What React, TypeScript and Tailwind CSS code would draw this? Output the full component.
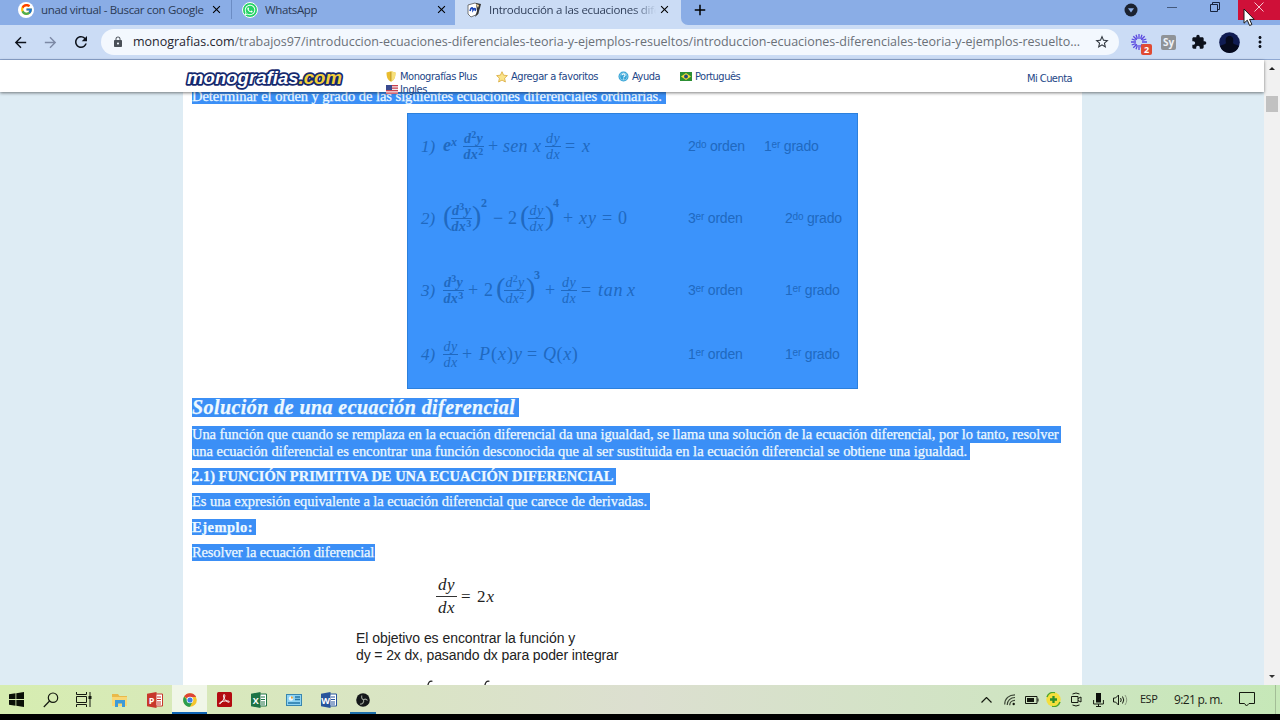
import type { ReactNode } from "react";
import { FcGoogle } from "react-icons/fc";
import { FaWhatsapp } from "react-icons/fa";
import {
  MdArrowBack,
  MdArrowForward,
  MdRefresh,
  MdLock,
  MdStarBorder,
  MdExtension,
  MdMoreVert,
  MdClose,
  MdAdd,
} from "react-icons/md";

/* ---------- Browser chrome ---------- */

const Monster = () => (
  <svg width="16" height="16" viewBox="0 0 16 16">
    <path d="M2 3l7-2 4 2-1 9-7 3-3-3z" fill="#fff" stroke="#555" strokeWidth=".8" />
    <path d="M10 1l5 1-1 4-2 6-3 3 2-6z" fill="#333" />
    <path d="M10 2l3 1-1 3z" fill="#f3d7a0" />
    <path d="M4 9c1-4 3-4 3-1 2-3 3-1 2 1" fill="none" stroke="#1c46b8" strokeWidth="1.600" />
  </svg>
);

function TabStrip() {
  return (
    <div className="h-[25px] flex bg-[#8aade6] text-[11.500px] text-[#2b3a55]">
      <div className="w-[232px] h-[19px] flex items-center pl-[18px] border-r border-[#6b8cc4]">
        <span className="w-4 h-4 rounded-full bg-white flex items-center justify-center">
          <FcGoogle size={13} />
        </span>
        <span className="ml-[7px] w-[169px] whitespace-nowrap tracking-[-0.35px]">
          unad virtual - Buscar con Google
        </span>
        <MdClose size={13} className="text-black" />
      </div>
      <div className="w-[223px] h-[19px] flex items-center pl-[10px]">
        <span className="w-4 h-4 rounded-full bg-[#25d366] border border-white flex items-center justify-center">
          <FaWhatsapp size={12} className="text-white" />
        </span>
        <span className="ml-[7px] w-[170px] whitespace-nowrap tracking-[-0.35px]">WhatsApp</span>
        <MdClose size={13} className="text-black" />
      </div>
      <div className="w-[226px] h-[25px] bg-[#cbdcf5] flex items-start pl-[11px]">
        <div className="h-[19px] flex items-center">
          <Monster />
          <span className="ml-[7px] w-[169px] overflow-hidden whitespace-nowrap tracking-[-0.3px] bg-gradient-to-r from-[#2b3a55] from-85% to-[#cbdcf5] to-99% bg-clip-text text-transparent">
            Introducción a las ecuaciones diferenciales
          </span>
          <MdClose size={13} className="text-black" />
        </div>
      </div>
      <div className="flex-1 flex bg-[#cbdcf5]">
        <div className="flex-1 flex rounded-bl-[7px] bg-[#8aade6]">
          <div className="w-[438px] h-[19px] flex items-center pl-[10px]">
            <MdAdd size={18} className="text-black" />
          </div>
          <div className="w-[24px] h-[19px] flex items-center justify-center">
            <svg width="14" height="14" viewBox="0 0 14 14">
              <circle cx="7" cy="7" r="6.500" fill="#1b2230" />
              <path d="M4 5.200h6L7 9.400z" fill="#8aade6" />
            </svg>
          </div>
          <div className="w-[57px] h-[15px] flex items-center justify-center">
            <span className="w-[10px] h-px bg-[#44597c]" />
          </div>
          <div className="w-[37px] h-[14px] flex items-center justify-end pr-[17px]">
            <svg width="10" height="10" viewBox="0 0 10 10" fill="none" stroke="#16233d">
              <path d="M.5 2.500h7v7h-7zM2.500 2.500v-2h7v7h-2" />
            </svg>
          </div>
          <div className="relative ml-auto w-[42px] h-5 bg-[#cf1038] flex items-center justify-center">
            <svg className="mb-[6px]" width="10" height="10" viewBox="0 0 10 10" stroke="#f4c6d0">
              <path d="M.5.5l9 9M9.500.5l-9 9" />
            </svg>
            <svg className="absolute left-[5px] top-[8px] z-30" width="13" height="19" viewBox="0 0 13 19">
              <path
                d="M1 1v14.200l3.300-3 2.300 5.300 2.300-1-2.300-5.100h4.600z"
                fill="#fff"
                stroke="#1a1a1a"
              />
            </svg>
          </div>
        </div>
      </div>
    </div>
  );
}

function Toolbar() {
  return (
    <div className="h-[35px] flex items-center bg-[#cbdcf5] border-b border-[#8fa8d2] text-[#0c111b]">
      <div className="w-[101px] flex items-center pl-[12px] gap-[13px]">
        <MdArrowBack size={17} />
        <MdArrowForward size={17} className="text-[#7c89a5]" />
        <MdRefresh size={18} />
      </div>
      <div className="w-[1018px] h-[26px] rounded-full bg-[#f3f8fe] flex items-center pl-[11px]">
        <MdLock size={12} className="text-[#4a5058]" />
        <span className="ml-[9px] w-[953px] whitespace-nowrap text-[12.500px] tracking-[-0.015px] text-[#6a7078]">
          <span className="text-[#1f2530]">monografias.com</span>
          /trabajos97/introduccion-ecuaciones-diferenciales-teoria-y-ejemplos-resueltos/introduccion-ecuaciones-diferenciales-teoria-y-ejemplos-resuelto...
        </span>
        <MdStarBorder size={16} className="ml-[8px] text-[#30363e]" />
      </div>
      <div className="flex-1 flex items-center pl-[12px]">
        <div className="relative w-[30px]">
          <svg width="16" height="16" viewBox="0 0 16 16" stroke="#5a48e0" strokeWidth="1.300">
            <path d="M8 0v5M8 11v5M0 8h5M11 8h5M2.300 2.300l3.500 3.500M10.200 10.200l3.500 3.500M2.300 13.700l3.500-3.500M10.200 5.800l3.500-3.500M5 .7l1.400 4M9.600 11.300l1.400 4M11 .7l-1.400 4M6.400 11.300L5 15.300M.7 5l4 1.400M.7 11l4-1.400M11.300 6.400l4-1.400" />
          </svg>
          <span className="absolute left-[10px] top-[10px] w-[11px] h-[11px] rounded-[2px] bg-[#e04a32] text-white text-[9px] leading-[11px] font-bold text-center">
            2
          </span>
        </div>
        <span className="w-[15px] h-[15px] rounded-[2px] bg-[#8f9397] text-[#eef2f8] text-[10px] leading-[14px] font-bold text-center">
          Sy
        </span>
        <MdExtension size={16} className="ml-[15px]" />
        <svg className="ml-[12px]" width="21" height="21" viewBox="0 0 21 21">
          <circle cx="10.500" cy="10.500" r="10.300" fill="#101c52" />
          <path d="M1 14a10 10 0 0019 0c-3-2-5-1-6-3 1-5-.5-7-3.500-7S6 6 7 11c-1 2-3 1-6 3z" fill="#060a1c" />
        </svg>
        <MdMoreVert size={18} className="ml-[11px]" />
      </div>
    </div>
  );
}

/* ---------- Site header ---------- */

const Logo = () => (
  <svg width="160" height="24" viewBox="0 0 160 24">
    <text
      x="3"
      y="17"
      textLength="155"
      lengthAdjust="spacingAndGlyphs"
      fontFamily="Liberation Sans, sans-serif"
      fontWeight="bold"
      fontStyle="italic"
      fontSize="18"
      stroke="#14286e"
      strokeWidth="3.400"
      strokeLinejoin="round"
      paintOrder="stroke"
      fill="#fff"
    >
      monografias<tspan fill="#f2cf3a">.com</tspan>
    </text>
  </svg>
);

const Shield = () => (
  <svg width="10" height="11" viewBox="0 0 10 11">
    <path d="M.5 1.500L5 .3l4.500 1.200C9.500 6 8.500 9 5 10.700 1.500 9 .5 6 .5 1.500z" fill="#e9bc2e" />
    <path d="M5 .3l4.500 1.200C9.500 6 8.500 9 5 10.700z" fill="#f7e07a" />
    <path d="M5 1v9" stroke="#a9851c" strokeWidth=".7" />
  </svg>
);

const Star = () => (
  <svg width="12" height="12" viewBox="0 0 12 12">
    <path
      d="M6 .7l1.600 3.500 3.800.4-2.800 2.600.8 3.800L6 9.100 2.600 11l.8-3.800L.6 4.600l3.800-.4z"
      fill="#fbe48a"
      stroke="#d9a93a"
      strokeWidth=".8"
    />
  </svg>
);

const Help = () => (
  <svg width="11" height="11" viewBox="0 0 11 11">
    <circle cx="5.500" cy="5.500" r="5" fill="#35a3d6" />
    <circle cx="5.500" cy="5.500" r="3.700" fill="none" stroke="#a7dbf0" strokeWidth=".6" />
    <path d="M4 4.300c0-2 3.200-1.800 3.100 0C7 5.500 5.600 5.300 5.600 6.600M5.600 7.500v1.100" stroke="#fff" fill="none" strokeWidth="1.100" />
  </svg>
);

const Brazil = () => (
  <svg width="12" height="9" viewBox="0 0 12 9">
    <path d="M0 0h12v9H0z" fill="#2c8f34" />
    <path d="M6 1l5 3.500L6 8 1 4.500z" fill="#f1dc3b" />
    <circle cx="6" cy="4.500" r="1.900" fill="#24487e" />
  </svg>
);

const Usa = () => (
  <svg width="12" height="9" viewBox="0 0 12 9">
    <path d="M0 0h12v9H0z" fill="#f4e9ec" />
    <path d="M0 .7h12M0 3.200h12M0 5.700h12M0 8.200h12" stroke="#c9424e" strokeWidth="1.200" />
    <path d="M0 0h6v5H0z" fill="#3a4a8e" />
  </svg>
);

function SiteHeader() {
  return (
    <div className="relative z-10 h-8 w-[1264px] bg-white shadow-[0_1px_3px_rgba(0,0,0,0.5)] flex text-[#1d4687] text-[11px] leading-[13px] [font-family:'DejaVu_Sans_Condensed','DejaVu_Sans',sans-serif]">
      <div className="pl-[184px] pt-[7px] w-[386px]">
        <Logo />
      </div>
      <div className="w-[641px] h-8 flex flex-col pt-[10px]">
        <div className="flex items-center">
          <div className="w-[110px] flex items-center gap-[4px] tracking-[-0.45px] whitespace-nowrap"><Shield />Monografías Plus</div>
          <div className="w-[122px] flex items-center gap-[3px] tracking-[-0.42px] whitespace-nowrap"><Star />Agregar a favoritos</div>
          <div className="w-[62px] flex items-center gap-[3px] tracking-[-0.5px]"><Help />Ayuda</div>
          <div className="flex items-center gap-[3px] tracking-[-0.5px]"><Brazil />Português</div>
        </div>
        <div className="flex items-center gap-[2px] tracking-[-0.4px]"><Usa />Ingles</div>
      </div>
      <span className="pt-[12px] tracking-[-0.55px] whitespace-nowrap">Mi Cuenta</span>
    </div>
  );
}

/* ---------- Maths ---------- */

// One symbol of an equation, in a cell of fixed width
const T = ({ w, children, up = false }: { w: string; children: ReactNode; up?: boolean }) => (
  <span className={`${w} shrink-0 whitespace-nowrap ${up ? "relative -top-[15px] text-[12px] font-bold not-italic" : ""}`}>
    {children}
  </span>
);

const N = ({ w, children }: { w: string; children: ReactNode }) => (
  <span className={`${w} shrink-0 whitespace-nowrap not-italic`}>{children}</span>
);

const Paren = ({ w, children }: { w: string; children: ReactNode }) => (
  <span className={`${w} shrink-0 not-italic text-[28px] leading-[28px] -translate-y-[2px]`}>{children}</span>
);

const Frac = ({ w, pow = "", bold = false }: { w: string; pow?: string; bold?: boolean }) => (
  <span className={`${w} shrink-0 flex flex-col items-center text-[14px] leading-[15px] ${bold ? "font-bold" : ""}`}>
    <span className="w-full text-center border-b border-[#2069c0] h-[16px] whitespace-nowrap tracking-[0.3px]">
      d<span className="relative -top-[5px] text-[10px] not-italic">{pow}</span>y
    </span>
    <span className="h-[15px] whitespace-nowrap tracking-[0.3px]">
      dx<span className="relative -top-[4px] text-[10px] not-italic">{pow}</span>
    </span>
  </span>
);

const rows = [
  {
    n: "1)",
    height: "h-[66px]",
    orden: ["2", "do"],
    ordenW: "w-[76px]",
    grado: ["1", "er"],
    eq: (
      <>
        <span className="w-[20px] font-bold shrink-0">e<span className="relative -top-[5px] text-[12px]">x</span></span>
        <Frac w="w-[21px]" pow="2" bold />
        <N w="w-[19px] pl-[4px]">+</N>
        <T w="w-[30px] tracking-[0.3px]">sen</T>
        <T w="w-[12px]">x</T>
        <Frac w="w-[16px]" />
        <N w="w-[21px] pl-[4px]">=</N>
        <T w="w-[10px]">x</T>
      </>
    ),
  },
  {
    n: "2)",
    height: "h-[78px]",
    orden: ["3", "er"],
    ordenW: "w-[97px]",
    grado: ["2", "do"],
    eq: (
      <>
        <Paren w="w-[8px]">(</Paren>
        <Frac w="w-[21px]" pow="3" bold />
        <Paren w="w-[9px]">)</Paren>
        <T up w="w-[12px]">2</T>
        <N w="w-[15px]">−</N>
        <N w="w-[12px]">2</N>
        <Paren w="w-[8px]">(</Paren>
        <Frac w="w-[17px]" />
        <Paren w="w-[8px]">)</Paren>
        <T up w="w-[10px]">4</T>
        <N w="w-[16px]">+</N>
        <T w="w-[23px] tracking-[1px]">xy</T>
        <N w="w-[16px]">=</N>
        <N w="w-[10px]">0</N>
      </>
    ),
  },
  {
    n: "3)",
    height: "h-[66px]",
    orden: ["3", "er"],
    ordenW: "w-[97px]",
    grado: ["1", "er"],
    eq: (
      <>
        <Frac w="w-[21px]" pow="3" bold />
        <N w="w-[20px] pl-[4px]">+</N>
        <N w="w-[12px]">2</N>
        <Paren w="w-[8px]">(</Paren>
        <Frac w="w-[22px]" pow="2" />
        <Paren w="w-[8px]">)</Paren>
        <T up w="w-[11px]">3</T>
        <N w="w-[16px]">+</N>
        <Frac w="w-[16px]" />
        <N w="w-[21px] pl-[4px]">=</N>
        <T w="w-[29px] tracking-[0.8px]">tan</T>
        <T w="w-[10px]">x</T>
      </>
    ),
  },
  {
    n: "4)",
    height: "h-[62px]",
    orden: ["1", "er"],
    ordenW: "w-[97px]",
    grado: ["1", "er"],
    eq: (
      <>
        <Frac w="w-[15px]" />
        <N w="w-[21px] pl-[4px]">+</N>
        <T w="w-[48px] tracking-[1px]">P<span className="not-italic">(</span>x<span className="not-italic">)</span>y</T>
        <N w="w-[16px]">=</N>
        <T w="w-[36px] tracking-[0.6px]">Q<span className="not-italic">(</span>x<span className="not-italic">)</span></T>
      </>
    ),
  },
];

const Ordinal = ({ parts, word }: { parts: string[]; word: string }) => (
  <>
    {parts[0]}
    <span className="relative -top-[3px] text-[10px]">{parts[1]}</span> {word}
  </>
);

function Exercises() {
  return (
    <div className="ml-[224px] mt-[9px] w-[451px] h-[276px] bg-[#3b93fb] border border-[#2c80dc] text-[#2069c0]">
      {rows.map((row) => (
        <div key={row.n} className={`${row.height} flex items-center pl-[13px]`}>
          <span className="w-[22px] pb-[2px] italic text-[17px]">{row.n}</span>
          <div className="w-[245px] pb-[2px] flex items-center italic text-[18px]">{row.eq}</div>
          <span className={`${row.ordenW} whitespace-nowrap text-[14px] tracking-[-0.2px] [font-family:'Liberation_Sans',sans-serif]`}>
            <Ordinal parts={row.orden} word="orden" />
          </span>
          <span className="whitespace-nowrap text-[14px] tracking-[-0.2px] [font-family:'Liberation_Sans',sans-serif]">
            <Ordinal parts={row.grado} word="grado" />
          </span>
        </div>
      ))}
    </div>
  );
}

/* ---------- Article ---------- */

// Selected line of text
const Sel = ({ className, children }: { className: string; children: ReactNode }) => (
  <div className={`ml-[9px] bg-[#3b8ff6] text-[#eef9ff] whitespace-nowrap [-webkit-text-stroke:0.25px_#eef9ff] ${className}`}>
    {children}
  </div>
);

const IntegralTip = () => (
  <svg width="6" height="6" viewBox="0 0 6 6" fill="none" stroke="#222" strokeWidth="1.300">
    <path d="M.8 6C1.200 2.500 2.500.6 5.400 1.300" />
  </svg>
);

function Article() {
  return (
    <div className="w-[899px] h-[593px] overflow-hidden bg-white text-[14.500px] leading-[17px] [font-family:'Liberation_Serif',serif]">
      <Sel className="w-[474px] h-[12px] leading-[9px] tracking-[-0.04px]">
        Determinar el orden y grado de las siguientes ecuaciones diferenciales ordinarias.
      </Sel>
      <Exercises />
      <Sel className="mt-[9px] w-[327px] h-[19px] text-[20px] leading-[19px] font-bold italic tracking-[0.43px]">
        Solución de una ecuación diferencial
      </Sel>
      <Sel className="mt-[9px] w-[869px] h-[17px] tracking-[-0.055px]">
        Una función que cuando se remplaza en la ecuación diferencial da una igualdad, se llama una solución de la ecuación diferencial, por lo tanto, resolver
      </Sel>
      <Sel className="w-[778px] h-[17px] tracking-[-0.02px]">
        una ecuación diferencial es encontrar una función desconocida que al ser sustituida en la ecuación diferencial se obtiene una igualdad.
      </Sel>
      <Sel className="mt-[8px] w-[424px] h-[17px] font-bold">
        2.1) FUNCIÓN PRIMITIVA DE UNA ECUACIÓN DIFERENCIAL
      </Sel>
      <Sel className="mt-[8px] w-[458px] h-[17px] tracking-[-0.06px]">
        Es una expresión equivalente a la ecuación diferencial que carece de derivadas.
      </Sel>
      <Sel className="mt-[9px] w-[64px] h-[16px] font-bold tracking-[0.5px]">Ejemplo:</Sel>
      <Sel className="mt-[9px] w-[183px] h-[17px] tracking-[-0.13px]">Resolver la ecuación diferencial</Sel>

      <div className="mt-[13px] mb-[12px] ml-[253px] h-[44px] flex items-center italic text-[17px] text-[#222]">
        <span className="w-[21px] flex flex-col items-center leading-[21px]">
          <span className="w-full h-[23px] leading-[22px] text-center border-b border-[#333] tracking-[0.5px]">dy</span>
          <span className="tracking-[0.5px]">dx</span>
        </span>
        <span className="ml-[4px] w-[16px] not-italic">=</span>
        <span className="tracking-[1px]"><span className="not-italic">2</span>x</span>
      </div>

      <div className="ml-[173px] text-[14px] text-[#222] [font-family:'Liberation_Sans',sans-serif]">
        <p className="tracking-[-0.05px]">El objetivo es encontrar la función y</p>
        <p className="tracking-[-0.12px]">dy = 2x dx, pasando dx para poder integrar</p>
      </div>
      <div className="mt-[16px] ml-[244px] flex gap-[51px]">
        <IntegralTip />
        <IntegralTip />
      </div>
    </div>
  );
}

function Scrollbar() {
  return (
    <div className="w-4 h-[625px] bg-[#f1f1f1] flex flex-col items-center justify-between py-[7px]">
      <div className="flex flex-col items-center gap-[26px]">
        <svg width="6" height="3" viewBox="0 0 6 3"><path d="M0 3h6L3 0z" fill="#222" /></svg>
        <span className="w-3 h-4 bg-[#c1c1c1]" />
      </div>
      <svg width="6" height="3" viewBox="0 0 6 3"><path d="M0 0h6L3 3z" fill="#333" /></svg>
    </div>
  );
}

/* ---------- Taskbar ---------- */

const Office = ({ color, letter }: { color: string; letter: string }) => (
  <svg width="16" height="16" viewBox="0 0 16 16">
    <path d="M8 2h7.500v12H8z" fill="#fff" stroke={color} />
    <path d="M10 5h4M10 7.500h4M10 10h4M10 12h4" stroke={color} />
    <path d="M0 1.800L9.500 0v16L0 14.200z" fill={color} />
    <text x="4.700" y="11.500" fontSize="9" fontWeight="bold" fill="#fff" textAnchor="middle" fontFamily="Open Sans, sans-serif">
      {letter}
    </text>
  </svg>
);

const apps = [
  {
    id: "start",
    icon: (
      <svg width="15" height="15" viewBox="0 0 15 15" fill="#0a0f08">
        <path d="M0 2.200l6.500-.9v5.800H0zM7.300 1.200L15 0v7.100H7.300zM0 7.900h6.500v5.800L0 12.800zM7.300 7.900H15V15l-7.700-1.200z" />
      </svg>
    ),
  },
  {
    id: "search",
    icon: (
      <svg width="16" height="16" viewBox="0 0 16 16" fill="none" stroke="#151a10" strokeWidth="1.200">
        <circle cx="10" cy="5.700" r="4.700" />
        <path d="M6.600 9L.8 15" />
      </svg>
    ),
  },
  {
    id: "tasks",
    icon: (
      <svg className="-ml-[3px]" width="16" height="15" viewBox="0 0 16 15" fill="none" stroke="#151a10">
        <path d="M.5 0v2.500h10V0M.5 4.500h10v6H.5zM.5 15v-2.500h10V15M14 0v15" />
        <path d="M12.500 4h3v3h-3z" fill="#151a10" stroke="none" />
      </svg>
    ),
  },
  {
    id: "files",
    icon: (
      <svg width="16" height="14" viewBox="0 0 16 14">
        <path d="M0 1h6l1.500 2H15v10H0z" fill="#e9b94a" />
        <path d="M0 4h15v9H0z" fill="#f8d775" />
        <path d="M3 7h10v7h-3v-3.500H6V14H3z" fill="#3d9bd8" />
      </svg>
    ),
  },
  { id: "powerpoint", icon: <Office color="#c8372b" letter="P" /> },
  {
    id: "chrome",
    active: true,
    icon: (
      <svg width="14" height="14" viewBox="0 0 14 14">
        <circle cx="7" cy="7" r="6.800" fill="#f4c52e" />
        <path d="M7 7L1.100 3.600A6.800 6.800 0 0112.900 3.600L13 4H7z" fill="#dd4437" />
        <path d="M1.100 3.600A6.800 6.800 0 007 13.800l2.600-5.300L7 10z" fill="#2a9d50" />
        <circle cx="7" cy="7" r="3.300" fill="#fff" />
        <circle cx="7" cy="7" r="2.600" fill="#3f7fe6" />
      </svg>
    ),
  },
  {
    id: "acrobat",
    icon: (
      <svg width="15" height="15" viewBox="0 0 15 15">
        <rect width="15" height="15" rx="1.500" fill="#b30b10" />
        <path
          d="M7 2.500c1.800 0 .8 4.500-3.700 9.200-1.800.6-1-1.800 3-2.500s6.500-.2 6 .8c-.8 1.200-5.800-2.200-5.800-6.500 0-.6.200-1 .5-1z"
          fill="none"
          stroke="#fff"
        />
      </svg>
    ),
  },
  { id: "excel", icon: <Office color="#1e7345" letter="X" /> },
  {
    id: "panel",
    icon: (
      <svg width="16" height="12" viewBox="0 0 16 12">
        <rect x=".5" y=".5" width="15" height="11" fill="#8fd3f2" stroke="#3886b0" />
        <circle cx="5" cy="4.500" r="2.200" fill="#eaf7fd" />
        <path d="M5 4.500V2.300a2.200 2.200 0 012.200 2.200z" fill="#e9a23a" />
        <path d="M9 3h5M9 5.500h5M2 9h12" stroke="#2577a8" strokeWidth="1.300" />
      </svg>
    ),
  },
  { id: "word", icon: <Office color="#27549b" letter="W" /> },
  {
    id: "obs",
    running: true,
    icon: (
      <svg width="14" height="14" viewBox="0 0 14 14">
        <circle cx="7" cy="7" r="6.800" fill="#15181a" />
        <path d="M6 2.500a3 3 0 001.500 4.300M11.500 7.500a3 3 0 00-4-.7M4 11a3 3 0 003.400-4.200" fill="none" stroke="#9da39a" strokeWidth="1.100" />
      </svg>
    ),
  },
];

function Taskbar() {
  return (
    <div className="h-[29px] flex bg-gradient-to-r from-[#d6edb0] via-[#dcdfd0] to-[#c6e8b8] text-[#1c2318] text-[12px]">
      <div className="flex -ml-px">
        {apps.map((app) => (
          <div
            key={app.id}
            className={`w-[34.700px] h-full flex flex-col items-center ${app.active ? "bg-[#f0f6e8]" : ""}`}
          >
            <div className="h-[27px] pt-[2px] flex items-center justify-center">{app.icon}</div>
            {app.active && <span className="w-full h-[2px] bg-[#0f64b4]" />}
            {app.running && <span className="w-[26px] h-[2px] bg-[#1e70ac]" />}
          </div>
        ))}
      </div>
      <div className="ml-auto flex items-center">
        <span className="w-[24px] flex justify-center">
          <svg width="11" height="6" viewBox="0 0 11 6" fill="none" stroke="#151a10" strokeWidth="1.200"><path d="M.5 5.500l5-5 5 5" /></svg>
        </span>
        <span className="w-[23px] flex justify-center">
          <svg width="12" height="12" viewBox="0 0 12 12" fill="none" stroke="#3a4434" strokeWidth="1.200">
            <path d="M.7 10.500C.7 4.500 5 .8 11 .8M3.200 11C3.200 6.500 6.500 3.500 11 3.500M5.700 11.300c0-3 2.300-5 5.300-5" />
            <circle cx="9.700" cy="10" r="1.200" fill="#151a10" stroke="none" />
          </svg>
        </span>
        <span className="w-[21px] flex justify-center">
          <svg width="14" height="8" viewBox="0 0 14 8">
            <path d="M.5.5h11.500v7H.5zM13 2.500v3" fill="none" stroke="#151a10" />
            <path d="M2 2h7v4H2z" fill="#151a10" />
          </svg>
        </span>
        <span className="w-[22px] flex justify-center">
          <svg width="15" height="15" viewBox="0 0 15 15">
            <circle cx="7.500" cy="7.500" r="7.200" fill="#f5df3c" />
            <path d="M1 5a7 7 0 018-4.500M14 10a7 7 0 01-8 4.500" fill="none" stroke="#4da52c" strokeWidth="1.500" />
            <path d="M7.500 4v7M4 7.500h7" stroke="#2b8f2a" strokeWidth="2.300" />
          </svg>
        </span>
        <span className="w-[24px] flex justify-center">
          <svg width="11" height="15" viewBox="0 0 11 15" fill="none" stroke="#151a10">
            <path d="M.5 4.500h6.500v6H.5zM7 6.500l3-1.500v5L7 8.500M1.500 2q3.500-2 7 0M1.500 13q3.500 2 7 0" />
          </svg>
        </span>
        <span className="w-[20px] flex justify-center">
          <svg width="11" height="14" viewBox="0 0 11 14">
            <path d="M3 0h5v9.500H3z" fill="#0c0f0a" />
            <path d="M.6 7v4h9.800V7M5.500 11v2.500M3 13.500h5" fill="none" stroke="#151a10" />
          </svg>
        </span>
        <span className="w-[24px] flex justify-center">
          <svg width="15" height="12" viewBox="0 0 15 12" fill="none" stroke="#151a10">
            <path d="M.5 4h2l3-3v10l-3-3h-2zM7.500 4q1.500 2 0 4M9.500 2.500q2.500 3.500 0 7" />
            <path d="M12 1q3.500 5 0 10" stroke="#8a9a80" />
          </svg>
        </span>
        <span className="ml-[8px] w-[34px] text-[11px] tracking-[-0.5px]">ESP</span>
        <span className="w-[65px] whitespace-nowrap text-[12px] tracking-[-0.65px]">9:21 p. m.</span>
        <svg width="16" height="15" viewBox="0 0 16 15" fill="none" stroke="#151a10">
          <path d="M.5.5h15v11H10L7.500 14 5.500 11.500h-5z" />
        </svg>
        <span className="ml-[20px] mr-[4px] w-px h-[29px] bg-[#a3bd97]" />
      </div>
    </div>
  );
}

export default function App() {
  return (
    <div className="w-[1280px] h-[720px] overflow-hidden flex flex-col bg-black [font-family:'Open_Sans','Noto_Sans',sans-serif]">
      <TabStrip />
      <Toolbar />
      <div className="h-[625px] flex">
        <div className="w-[1264px] h-[625px] bg-[#deecf4]">
          <SiteHeader />
          <div className="pl-[183px]">
            <Article />
          </div>
        </div>
        <Scrollbar />
      </div>
      <Taskbar />
    </div>
  );
}
